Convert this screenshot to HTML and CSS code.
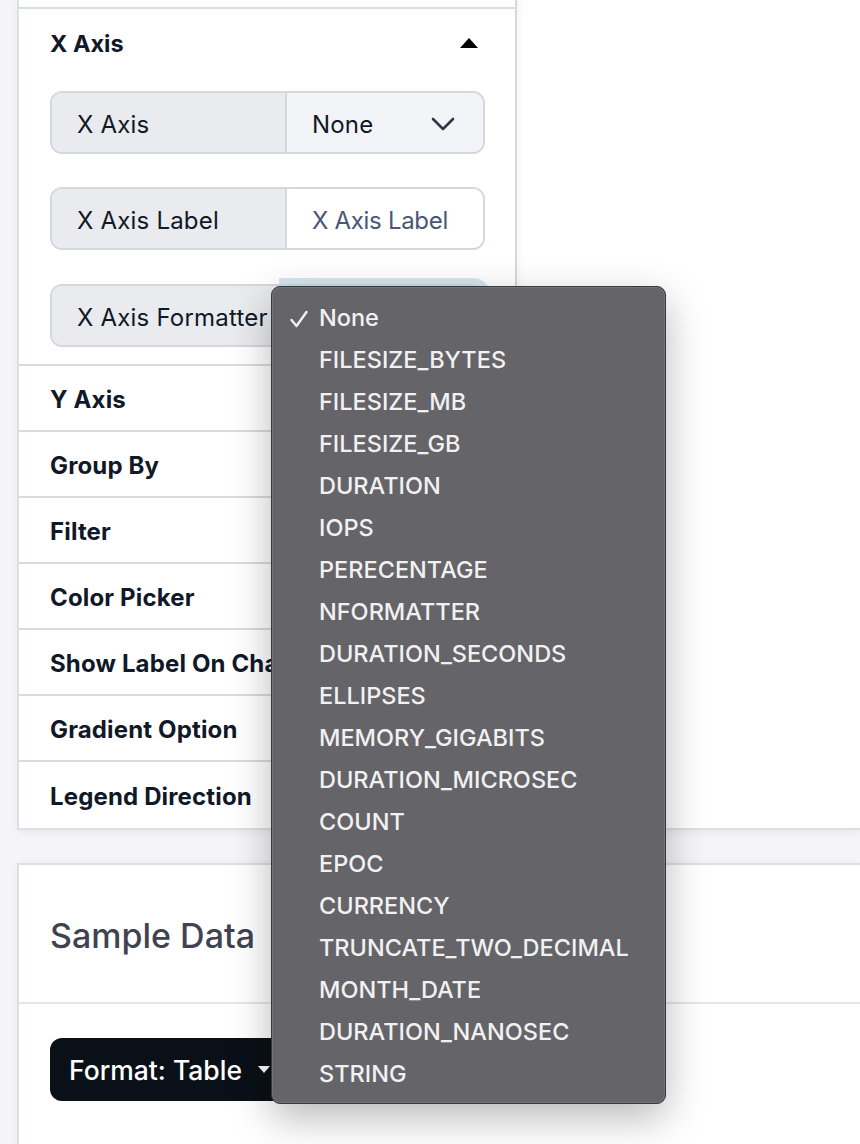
FILE: index.html
```html
<!DOCTYPE html>
<html lang="en">
<head>
<meta charset="utf-8">
<title>Chart Builder</title>
<link rel="stylesheet" href="styles.css">
</head>
<body>
<div class="page">
  <div class="card builder">
    <aside class="sidebar">
      <div class="section-tail"></div>
      <section class="section-open">
        <header class="section-head">
          <h3>X Axis</h3>
          <svg class="caret-up" width="18" height="10" viewBox="0 0 18 10"><polygon points="0,10 9,0 18,10" fill="#000"/></svg>
        </header>
        <div class="field">
          <span class="field-label">X Axis</span>
          <div class="field-select">
            <span>None</span>
            <svg class="chevron" width="24" height="14" viewBox="0 0 24 14"><path d="M2 2 L12 12 L22 2" fill="none" stroke="#2d3748" stroke-width="2.6" stroke-linecap="round" stroke-linejoin="round"/></svg>
          </div>
        </div>
        <div class="field">
          <span class="field-label">X Axis Label</span>
          <span class="field-input">X Axis Label</span>
        </div>
        <div class="field field-last">
          <span class="field-label">X Axis Formatter</span>
          <div class="field-select is-focused"></div>
        </div>
      </section>
      <div class="section-row">Y Axis</div>
      <div class="section-row">Group By</div>
      <div class="section-row">Filter</div>
      <div class="section-row">Color Picker</div>
      <div class="section-row">Show Label On Chart</div>
      <div class="section-row">Gradient Option</div>
      <div class="section-row last">Legend Direction</div>
    </aside>
    <div class="canvas"></div>
  </div>

  <div class="card sample">
    <div class="sample-head"><h2>Sample Data</h2></div>
    <div class="sample-body">
      <button class="format-btn">Format: Table <span class="btn-caret"></span></button>
    </div>
  </div>

  <ul class="menu">
    <li class="selected"><svg class="check" width="20" height="18" viewBox="0 0 20 18"><path d="M2.5 10 L7.5 16 L17.5 2" fill="none" stroke="#f2f2f3" stroke-width="2.4" stroke-linecap="round" stroke-linejoin="round"/></svg>None</li>
    <li>FILESIZE_BYTES</li>
    <li>FILESIZE_MB</li>
    <li>FILESIZE_GB</li>
    <li>DURATION</li>
    <li>IOPS</li>
    <li>PERECENTAGE</li>
    <li>NFORMATTER</li>
    <li>DURATION_SECONDS</li>
    <li>ELLIPSES</li>
    <li>MEMORY_GIGABITS</li>
    <li>DURATION_MICROSEC</li>
    <li>COUNT</li>
    <li>EPOC</li>
    <li>CURRENCY</li>
    <li>TRUNCATE_TWO_DECIMAL</li>
    <li>MONTH_DATE</li>
    <li>DURATION_NANOSEC</li>
    <li>STRING</li>
  </ul>
</div>
</body>
</html>
```

FILE: styles.css
```css
* { box-sizing: border-box; }

body {
  margin: 0;
  background: #f5f5f7;
  font-family: Inter, "Noto Sans", sans-serif;
  color: #111827;
}

.page {
  position: relative;
  height: 1144px;
  padding-left: 17px;
  overflow: hidden;
}

.card {
  background: #fff;
  border: 2px solid #dcdfe3;
  border-right: none;
  box-shadow: 0 2px 8px rgba(15, 23, 42, 0.06);
}

/* chart builder: settings sidebar + preview canvas */
.builder {
  display: flex;
  height: 830px;
  border-top: none;
}

.sidebar {
  width: 498px;
  flex: none;
  border-right: 2px solid #d5d8dc;
  display: flex;
  flex-direction: column;
}

.section-tail {
  height: 11px;
  border-bottom: 2px solid #d8dbdf;
}

.section-open {
  padding: 19px 30px 17px 31px;
  border-bottom: 2px solid #d8dbdf;
  display: flex;
  flex-direction: column;
  gap: 33px;
}

.section-head {
  height: 30px;
  display: flex;
  align-items: center;
  justify-content: space-between;
}

.section-head h3 {
  margin: 0;
  font-size: 23.5px;
  font-weight: 700;
}

.caret-up { margin-right: 7px; }

.field {
  display: flex;
  height: 63px;
  border: 2px solid #d4d7dc;
  border-radius: 12px;
  font-size: 24px;
  letter-spacing: 0.2px;
}

.field-last { margin-top: 1px; }

.field-label {
  width: 235px;
  flex: none;
  display: flex;
  align-items: center;
  padding: 3px 0 0 25px;
  background: #e9ebef;
  border-right: 2px solid #d4d7dc;
  border-radius: 10px 0 0 10px;
  white-space: nowrap;
}

.field-select {
  flex: 1;
  display: flex;
  align-items: center;
  justify-content: space-between;
  padding: 3px 28px 0 25px;
  background: #f3f4f7;
  border-radius: 0 10px 10px 0;
}

.field-select.is-focused {
  background: #d5e6ed;
  box-shadow: 0 0 0 8px rgba(200, 222, 232, 0.75);
}

.field-input {
  flex: 1;
  display: flex;
  align-items: center;
  padding: 3px 0 0 25px;
  color: #4b5676;
  background: #fff;
  letter-spacing: -0.3px;
  border-radius: 0 10px 10px 0;
}

.section-row {
  height: 66px;
  flex: none;
  display: flex;
  align-items: center;
  padding: 2px 0 0 31px;
  border-bottom: 2px solid #d8dbdf;
  font-size: 24px;
  font-weight: 700;
  letter-spacing: 0.15px;
  white-space: nowrap;
  overflow: hidden;
}

.section-row.last { border-bottom: none; }

.canvas {
  flex: 1;
  background: #fff;
  box-shadow: inset 8px 0 8px -6px rgba(15, 23, 42, 0.05);
}

/* sample data card */
.sample {
  margin-top: 33px;
  height: 400px;
}

.sample-head {
  height: 139px;
  padding: 51px 0 0 31px;
  border-bottom: 2px solid #e3e5e9;
}

.sample-head h2 {
  margin: 0;
  font-size: 34px;
  line-height: 40px;
  font-weight: 500;
  color: #3f4350;
}

.sample-body {
  padding: 34px 31px;
}

.format-btn {
  height: 63px;
  display: inline-flex;
  align-items: center;
  gap: 16px;
  padding: 0 19px;
  border: none;
  border-radius: 12px;
  background: #0a1017;
  color: #fff;
  font-family: inherit;
  font-size: 26.5px;
  font-weight: 500;
}

.btn-caret {
  width: 0;
  height: 0;
  border-left: 6px solid transparent;
  border-right: 6px solid transparent;
  border-top: 7px solid #fff;
}

/* native-style options popup */
.menu {
  position: absolute;
  left: 271px;
  top: 286px;
  width: 395px;
  height: 818px;
  margin: 0;
  padding: 10px 0;
  list-style: none;
  background: #656468;
  border: 1px solid #38373a;
  border-radius: 9px;
  box-shadow: inset 0 0 0 1px rgba(255, 255, 255, 0.1), 0 14px 40px rgba(0, 0, 0, 0.28);
}

.menu li {
  position: relative;
  height: 42px;
  line-height: 42px;
  padding-left: 47px;
  color: #f1f1f2;
  font-size: 23.5px;
  font-weight: 500;
  white-space: nowrap;
}

.menu .check {
  position: absolute;
  left: 17px;
  top: 13px;
}
```
